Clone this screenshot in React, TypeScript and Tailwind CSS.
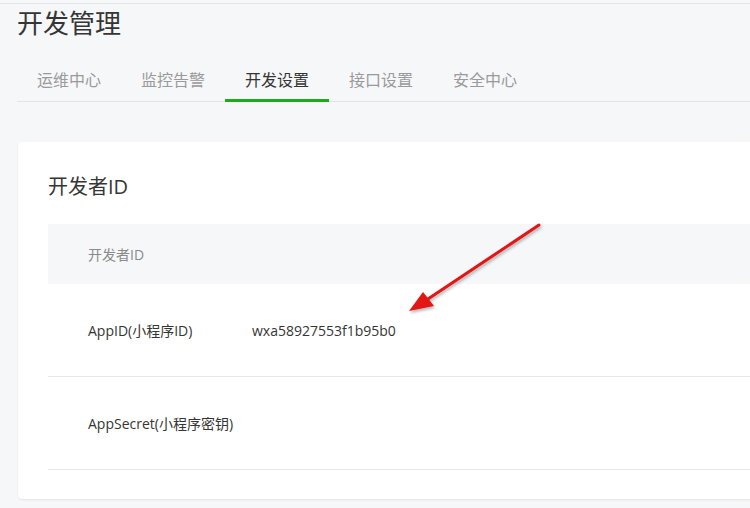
import React from "react";

const tabs = ["运维中心", "监控告警", "开发设置", "接口设置", "安全中心"];

export default function App() {
    return (
        <div
            className="relative w-[750px] h-[508px] overflow-hidden bg-[#f6f7f9] text-[#353535]"
            style={{ fontFamily: '"Open Sans", "Noto Sans CJK SC", sans-serif' }}
        >
            {/* Top rule */}
            <div className="mt-[3px] border-t border-[#e3e4e6]" />

            {/* Page title */}
            <h1 className="pl-[17px] mt-[2px] text-[26px] leading-[34px] font-normal">
                开发管理
            </h1>

            {/* Tabs */}
            <div className="ml-[17px] mt-[19px] flex border-b border-[#e3e4e6]">
                {tabs.map((t) => {
                    const active = t === "开发设置";
                    return (
                        <div
                            key={t}
                            className={`relative flex h-[42px] w-[104px] items-center justify-center text-[16px] ${active ? "text-[#353535]" : "text-[#9a9a9a]"
                                }`}
                        >
                            {t}
                            {active && (
                                <span className="absolute -bottom-px left-0 right-0 h-[3px] bg-[#1aad19]" />
                            )}
                        </div>
                    );
                })}
            </div>

            {/* Card */}
            <div className="ml-[18px] mt-[40px] w-[760px] rounded-[4px] bg-white pt-[31px] pb-[29px] pl-[30px] shadow-[0_1px_2px_rgba(0,0,0,0.08)]">
                <h2 className="text-[20px] leading-[28px] font-normal">开发者ID</h2>

                <div className="mt-[23px]">
                    <div className="flex h-[60px] items-center bg-[#f6f7f9] pl-[40px] text-[14px] text-[#8a8a8a]">
                        开发者ID
                    </div>
                    <div className="flex h-[93px] items-center border-b border-[#e7e7eb] pl-[40px] text-[14px]">
                        <span className="w-[164px]">AppID(小程序ID)</span>
                        <span>wxa58927553f1b95b0</span>
                    </div>
                    <div className="flex h-[93px] items-center border-b border-[#e7e7eb] pl-[40px] text-[14px]">
                        <span className="w-[164px]">AppSecret(小程序密钥)</span>
                    </div>
                </div>
            </div>

            {/* Annotation arrow */}
            <svg
                className="pointer-events-none absolute left-0 top-0"
                width="750"
                height="508"
                viewBox="0 0 750 508"
            >
                <defs>
                    <filter id="sh" x="-20%" y="-20%" width="140%" height="140%">
                        <feDropShadow dx="1" dy="2" stdDeviation="1.5" floodColor="#000" floodOpacity="0.3" />
                    </filter>
                </defs>
                <g filter="url(#sh)">
                    <line x1="539" y1="225" x2="425" y2="301" stroke="#e31414" strokeWidth="3" strokeLinecap="round" />
                    <polygon points="409,311 423,292 434,306" fill="#e31414" />
                </g>
            </svg>
        </div>
    );
}
